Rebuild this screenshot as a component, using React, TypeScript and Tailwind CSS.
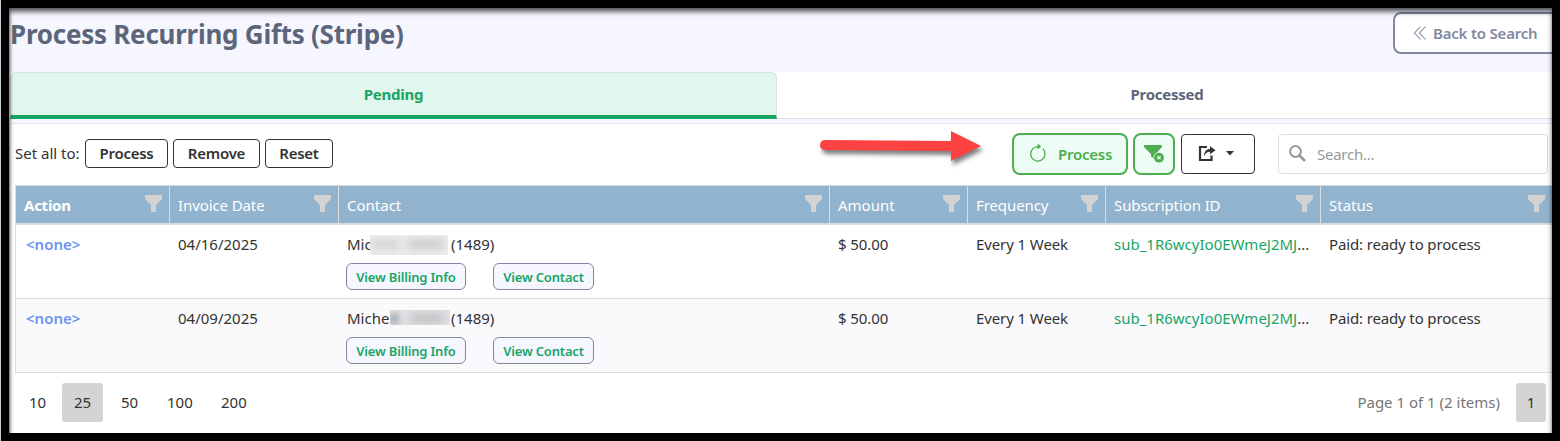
import type { ReactNode } from "react";

const columns = [
  { label: "Action", style: "font-bold tracking-[-0.25px]" },
  { label: "Invoice Date", style: "tracking-[-0.1px]" },
  { label: "Contact", style: "" },
  { label: "Amount", style: "" },
  { label: "Frequency", style: "tracking-[-0.1px]" },
  { label: "Subscription ID", style: "tracking-[-0.1px]" },
  { label: "Status", style: "" },
];

const gridCols = "grid grid-cols-[153px_169px_491px_138px_138px_215px_232px]";

function FunnelIcon() {
  return (
    <svg width="17" height="17" viewBox="0 0 17 17" className="shrink-0" fill="#d3d3d3">
      <path d="M0 0H17V4L11 10V17H6V10L0 4Z" />
    </svg>
  );
}

function OutlineButton({ children, className }: { children: ReactNode; className: string }) {
  return (
    <button
      className={`flex h-[29px] items-center justify-center rounded-[4px] border border-[#333] bg-white text-[15px] font-semibold tracking-[-0.25px] text-[#333] ${className}`}
    >
      {children}
    </button>
  );
}

function SmallButton({ children, className }: { children: ReactNode; className: string }) {
  return (
    <button
      className={`flex h-[27px] items-center justify-center rounded-[6px] border border-[#7e89a0] bg-[#f6f6ff] text-[13px] font-semibold tracking-[-0.18px] whitespace-nowrap text-[#18a566] ${className}`}
    >
      {children}
    </button>
  );
}

function Row({ date, name, blur, alt }: { date: string; name: string; blur: ReactNode; alt?: boolean }) {
  return (
    <div
      className={`${gridCols} h-[74px] border-b border-[#dddddd] pt-[8px] text-[15px] leading-[22px] text-[#333] ${alt ? "bg-[#fafafc]" : "bg-white"}`}
    >
      <div className="pl-[10px] font-semibold text-[#6b95f0]">&lt;none&gt;</div>
      <div className="pl-[9px]">{date}</div>
      <div className="pl-[8px]">
        <div className="flex pl-px">
          <div className="flex w-[104px]">
            <span className={alt ? "w-[42px]" : "w-[23px]"}>{name}</span>
            {blur}
          </div>
          <span>(1489)</span>
        </div>
        <div className="mt-[8px] flex gap-[27px]">
          <SmallButton className="w-[120px]">View Billing Info</SmallButton>
          <SmallButton className="w-[101px]">View Contact</SmallButton>
        </div>
      </div>
      <div className="pl-[9px] tracking-[-0.1px]">$ 50.00</div>
      <div className="pl-[9px] tracking-[-0.1px]">Every 1 Week</div>
      <div className="pl-[9px] whitespace-nowrap text-[#18a566]">
        sub_1R6wcyIo0EWmeJ2MJ<span className="text-[#333]">...</span>
      </div>
      <div className="pl-[9px] tracking-[-0.14px]">Paid: ready to process</div>
    </div>
  );
}

export default function App() {
  return (
    <div className="h-[441px] w-[1560px] border-l border-[#c9c9cf] bg-black pt-[8px] pl-[8px] font-['Noto_Sans','Open_Sans',sans-serif]">
      <div className="relative h-[425px] w-[1543px] overflow-hidden bg-white">
        <header className="flex h-[64px] justify-between bg-[#f6f6ff]">
          <h1 className="pt-[8px] pl-px text-[26px] leading-[36px] font-bold tracking-[-0.25px] whitespace-nowrap text-[#5c657a]">
            Process Recurring Gifts (Stripe)
          </h1>
          <button className="mt-[4px] mr-[-7px] flex h-[42px] w-[166px] shrink-0 items-center rounded-[8px] border-2 border-[#7e89a0] bg-white pl-[18px] text-[15px] font-semibold tracking-[-0.2px] text-[#7e89a0]">
            <svg width="14" height="16" viewBox="0 0 14 16" fill="none" stroke="#7e89a0" strokeWidth="1.1" className="mr-[6px] mb-px">
              <path d="M7.5 1.5L1.5 8L7.5 14.5M12.5 1.5L6.5 8L12.5 14.5" />
            </svg>
            <span className="whitespace-nowrap">Back to Search</span>
          </button>
        </header>

        <nav className="flex h-[47px] bg-white text-[15px] font-bold tracking-[-0.25px]">
          <div className="ml-px flex w-[767px] items-center justify-center rounded-t-[6px] border border-b-4 border-[#dbe0e3] border-b-[#18a566] bg-[#e1f6ec] text-[#18a566]">
            Pending
          </div>
          <div className="flex grow items-center justify-center border-b border-[#dcdfe8] pb-px pl-[5px] text-[#5c657a]">
            <span>Processed</span>
          </div>
        </nav>
        <div className="h-[4px] bg-[#f6f6ff]" />

        <main className="h-[310px] rounded-tl-[4px] border-t border-l border-[#e4e6ee] bg-white">
          <div className="flex h-[61px] items-center pb-[2px] pl-[5px]">
            <span className="w-[70px] text-[15px] whitespace-nowrap text-[#333]">Set all to:</span>
            <OutlineButton className="w-[83px]">Process</OutlineButton>
            <OutlineButton className="ml-[5px] w-[87px]">Remove</OutlineButton>
            <OutlineButton className="ml-[5px] w-[68px]">Reset</OutlineButton>

            <svg width="176" height="46" viewBox="0 0 176 46" className="mt-[-12px] ml-[482px] shrink-0 overflow-visible">
              <path
                d="M10 15L136 16V6L166 21L136 36V26L10 25A5 5 0 0 1 10 15Z"
                fill="#fd4242"
                className="drop-shadow-[2px_4px_2px_rgba(0,0,0,0.5)]"
              />
            </svg>

            <button className="ml-[21px] flex h-[42px] w-[116px] shrink-0 items-center rounded-[8px] border-2 border-[#4cae4f] bg-[#edfcf5] text-[15px] font-semibold tracking-[-0.25px] text-[#4cae4f]">
              <svg width="18" height="20" viewBox="0 0 18 20" fill="none" stroke="#4cae4f" strokeWidth="1.3" className="mr-[11px] mb-[2px] ml-[15px]">
                <path d="M13.8 5.6A7.2 7.2 0 1 1 6.5 4Q8 3.5 9.5 3.5" />
                <path d="M8.6 0.5L12.2 3.5L8.6 6.5Z" fill="#4cae4f" stroke="none" />
              </svg>
              <span className="pt-[2px]">Process</span>
            </button>
            <button className="ml-[5px] flex h-[42px] w-[42px] shrink-0 items-center justify-center rounded-[8px] border-2 border-[#4cae4f] bg-[#edfcf5]">
              <svg width="20" height="18" viewBox="0 0 20 18">
                <path d="M0 1Q0 0 1 0H17Q18 0 18 1V2L11.5 9V15L7 11.5V9L0 2Z" fill="#4cae4f" />
                <circle cx="15" cy="12.7" r="5.6" fill="#edfcf5" />
                <circle cx="15" cy="12.7" r="4.9" fill="#4cae4f" />
                <path d="M13.4 11.1L16.6 14.3M16.6 11.1L13.4 14.3" stroke="#edfcf5" strokeWidth="1.3" />
              </svg>
            </button>
            <button className="ml-[6px] flex h-[40px] w-[74px] shrink-0 items-center rounded-[4px] border border-[#333] bg-white pl-[16px]">
              <svg width="18" height="17" viewBox="0 0 18 17" fill="none" stroke="#333">
                <path d="M9 2H2V15H13.5V10.5" strokeWidth="2.2" />
                <path d="M6.2 11.5C5.8 6.5 8.5 4 12 4V1.2L17.6 5.2L12 9.2V6.8C9.5 6.6 7.3 8 6.2 11.5Z" fill="#333" stroke="none" />
              </svg>
              <svg width="8" height="5" viewBox="0 0 8 5" className="ml-[10px]">
                <path d="M0 0H8L4 4.5Z" fill="#333" />
              </svg>
            </button>
            <div className="ml-[23px] flex h-[40px] w-[270px] shrink-0 items-center rounded-[4px] border border-[#ddd] bg-white pl-[10px] text-[15px] tracking-[-0.25px] text-[#999]">
              <svg width="17" height="17" viewBox="0 0 17 17" fill="none" stroke="#999" className="mr-[11px]">
                <circle cx="6.5" cy="6.5" r="5.4" strokeWidth="2" />
                <path d="M10.5 10.5L16 16" strokeWidth="2.6" />
              </svg>
              <span className="pt-[2px]">Search...</span>
            </div>
          </div>

          <div className="ml-[5px] w-[1537px] overflow-hidden border-t border-l border-[#ddd]">
            <div className={`${gridCols} h-[39px] border-b-2 border-[#dddddd] bg-[#92b3cd] text-[15px] text-white`}>
              {columns.map((c, i) => (
                <div
                  key={c.label}
                  className={`flex items-start justify-between pr-[7px] pl-[8px] ${i ? "border-l border-[#ddd]" : ""}`}
                >
                  <span className={`pt-[8px] leading-[22px] ${c.style}`}>{c.label}</span>
                  <span className="pt-[9px]">
                    <FunnelIcon />
                  </span>
                </div>
              ))}
            </div>
            <Row
              date="04/16/2025"
              name="Mic"
              blur={
                <span className="relative mt-[2px] h-[20px] w-[78px] overflow-hidden bg-[#ececed]">
                  <span className="absolute top-[5px] left-[2px] h-[9px] w-[27px] bg-[#d2d2d4] blur-[4px]" />
                  <span className="absolute top-[5px] left-[38px] h-[9px] w-[36px] bg-[#cacacc] blur-[4px]" />
                </span>
              }
            />
            <Row
              alt
              date="04/09/2025"
              name="Miche"
              blur={
                <span className="relative ml-px mt-[3px] h-[15px] w-[60px] overflow-hidden bg-[#e2e2e5]">
                  <span className="absolute top-[3px] -left-px h-[12px] w-[10px] bg-[#b0b0b4] blur-[3px]" />
                  <span className="absolute top-[4px] left-[20px] h-[9px] w-[34px] bg-[#c0c0c3] blur-[4px]" />
                </span>
              }
            />
          </div>

          <footer className="mt-[10px] flex h-[39px] items-center pl-[5px] text-[15px] text-[#333]">
            <span className="w-[47px] pl-[14px]">10</span>
            <span className="flex h-[39px] w-[41px] items-center justify-center rounded-[3px] bg-[#d4d4d4]">25</span>
            <span className="ml-[18px] w-[46px]">50</span>
            <span className="w-[54px]">100</span>
            <span>200</span>
            <span className="mr-[16px] ml-auto text-[#767676]">Page 1 of 1 (2 items)</span>
            <span className="mr-[6px] flex h-[39px] w-[30px] items-center justify-center rounded-[3px] bg-[#d4d4d4]">1</span>
          </footer>
        </main>
        <div className="pointer-events-none absolute inset-x-0 top-0 -bottom-[10px] shadow-[inset_0_4px_5px_rgba(0,0,0,0.6),inset_1px_0_3px_rgba(0,0,0,0.35)]" />
      </div>
    </div>
  );
}
